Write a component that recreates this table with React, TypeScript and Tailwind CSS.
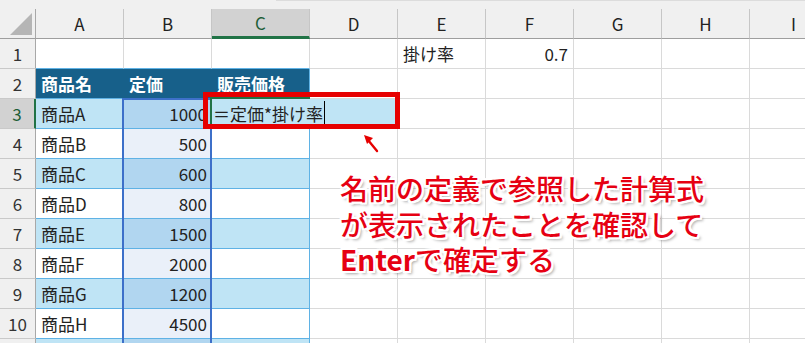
import React from "react";

const W: Record<string, string> = {
  A: "w-[88px]",
  B: "w-[88px]",
  C: "w-[98px]",
  D: "w-[88px]",
  E: "w-[88px]",
  F: "w-[88px]",
  G: "w-[88px]",
  H: "w-[88px]",
  I: "w-[88px]",
};
const COLS = ["A", "B", "C", "D", "E", "F", "G", "H", "I"];

const CELL =
  "h-[30px] shrink-0 border-r border-b flex items-center px-[5px] text-[17px] text-[#222] whitespace-nowrap overflow-hidden";
const GRID = "border-r-[#dadada] border-b-[#dadada]";
const TBL = "border-r-[#5fb2e5] border-b-[#5fb2e5]";

const PRICES = [1000, 500, 600, 800, 1500, 2000, 1200, 4500];

function RowHead({ n, active }: { n: number | string; active?: boolean }) {
  return (
    <div
      className={
        "h-[30px] w-[36px] shrink-0 border-b border-b-[#c9c9c9] flex items-center justify-center text-[17px] " +
        (active
          ? "bg-[#d2d2d2] border-r-2 border-r-[#217346] text-[#1d5e37]"
          : "bg-[#f0f0f0] border-r border-r-[#a8a8a8] text-[#333]")
      }
    >
      {n}
    </div>
  );
}

function cellFor(col: string, r: number) {
  const w = W[col];
  if (r === 1) {
    if (col === "E") return <div key={col} className={`${CELL} ${w} ${GRID}`}>掛け率</div>;
    if (col === "F")
      return (
        <div key={col} className={`${CELL} ${w} ${GRID} justify-end`}>
          0.7
        </div>
      );
    if (col === "A" || col === "B" || col === "C")
      return <div key={col} className={`${CELL} ${w} border-r-[#dadada] border-b-[#5fb2e5]`} />;
    return <div key={col} className={`${CELL} ${w} ${GRID}`} />;
  }
  if (r === 2) {
    const label: Record<string, string> = { A: "商品名", B: "定価", C: "販売価格" };
    if (col === "A" || col === "B")
      return (
        <div key={col} className={`${CELL} ${w} bg-[#17608a] border-r-[#17608a] border-b-[#5fb2e5] !text-white font-bold`}>
          {label[col]}
        </div>
      );
    if (col === "C")
      return (
        <div key={col} className={`${CELL} ${w} bg-[#17608a] ${TBL} !text-white font-bold`}>
          {label[col]}
        </div>
      );
    return <div key={col} className={`${CELL} ${w} ${GRID}`} />;
  }
  const light = r % 2 === 1;
  const idx = r - 3;
  if (col === "A")
    return (
      <div key={col} className={`${CELL} ${w} ${TBL} ${light ? "bg-[#bfe4f5]" : "bg-white"}`}>
        {idx < 8 ? `商品${"ABCDEFGH"[idx]}` : ""}
      </div>
    );
  if (col === "B")
    return (
      <div key={col} className={`${CELL} ${w} ${TBL} justify-end pr-[4px] ${light ? "bg-[#b1d6f0]" : "bg-[#eaf0f9]"}`}>
        {idx < 8 ? PRICES[idx] : ""}
      </div>
    );
  if (col === "C")
    return <div key={col} className={`${CELL} ${w} ${TBL} ${light ? "bg-[#bfe4f5]" : "bg-white"}`} />;
  return <div key={col} className={`${CELL} ${w} ${GRID}`} />;
}

export default function App() {
  const rows = [1, 2, 3, 4, 5, 6, 7, 8, 9, 10, 11];
  return (
    <div className="relative w-[805px] h-[343px] overflow-hidden bg-white font-['Noto_Sans_CJK_JP','Noto_Sans',sans-serif]">
      {/* top strip */}
      <div className="flex h-[9px] bg-[#f0f0f0]">
        <div className="w-[276px] shrink-0" />
        <div className="flex-1 border-t border-t-[#dcdcdc]" />
      </div>

      {/* column headers */}
      <div className="flex h-[30px] bg-[#f0f0f0]">
        <div className="relative w-[36px] shrink-0 h-[30px] border-r border-b border-r-[#a8a8a8] border-b-[#9e9e9e]">
          <svg width="36" height="30" className="absolute left-0 top-0">
            <polygon points="10,26 32,26 32,4" fill="#b5b5b5" />
          </svg>
        </div>
        {COLS.map((c) =>
          c === "C" ? (
            <div
              key={c}
              className={`${W[c]} shrink-0 h-[30px] flex items-center justify-center bg-[#d2d2d2] border-r border-r-[#c6c6c6] border-b-[3px] border-b-[#217346] text-[17px] text-[#1d5e37]`}
            >
              {c}
            </div>
          ) : (
            <div
              key={c}
              className={`${W[c]} shrink-0 h-[30px] flex items-center justify-center border-r border-r-[#c6c6c6] border-b border-b-[#9e9e9e] text-[17px] text-[#222]`}
            >
              {c}
            </div>
          )
        )}
      </div>

      {/* rows */}
      {rows.map((r) => (
        <div key={r} className="flex">
          <RowHead n={r === 11 ? "" : r} active={r === 3} />
          {COLS.map((c) => cellFor(c, r))}
        </div>
      ))}

      {/* reference range highlight on 定価 */}
      <div className="absolute left-[122px] top-[98px] w-[90px] h-[260px] border-2 border-[#3d70c9]" />

      {/* in-cell edit box */}
      <div className="absolute left-[212px] top-[99px] w-[185px] h-[29px] bg-[#bfe4f5] flex items-center pl-[1px] text-[17px] text-[#222] whitespace-nowrap">
        ＝定価*掛け率
        <span className="ml-[1px] inline-block w-px h-[25px] bg-black" />
      </div>
      <div className="absolute left-[210px] top-[97px] w-[100px] h-[32px] border-t-2 border-l-2 border-[#217346]" />

      {/* red callout frame */}
      <div className="absolute left-[203px] top-[92px] w-[197px] h-[37px] border-[5px] border-[#e60000]" />

      {/* arrow */}
      <svg className="absolute left-[356px] top-[128px]" width="30" height="30" viewBox="0 0 30 30">
        <line x1="21" y1="23" x2="11" y2="11" stroke="#fff" strokeWidth="4.5" strokeLinecap="round" />
        <line x1="21" y1="23" x2="12" y2="12" stroke="#e60000" strokeWidth="2.4" strokeLinecap="round" />
        <polygon points="8,7 17,10 11,16" fill="#e60000" />
      </svg>

      {/* annotation */}
      <div className="absolute left-[340px] top-[171px] text-[28px] leading-[35.5px] font-medium text-[#e60012] whitespace-nowrap [text-shadow:2px_0_0_#fff,-2px_0_0_#fff,0_2px_0_#fff,0_-2px_0_#fff,2px_2px_0_#fff,-2px_-2px_0_#fff,2px_-2px_0_#fff,-2px_2px_0_#fff,3px_3px_3px_rgba(0,0,0,0.35)]">
        <div>名前の定義で参照した計算式</div>
        <div>が表示されたことを確認して</div>
        <div>
          <span className="font-bold">Enter</span>で確定する
        </div>
      </div>
    </div>
  );
}
